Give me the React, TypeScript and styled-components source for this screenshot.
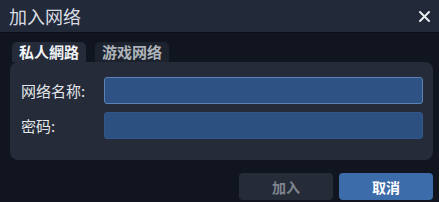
import React, { useState } from 'react';
import styled, { createGlobalStyle } from 'styled-components';

const GlobalStyle = createGlobalStyle`
  html, body {
    margin: 0;
    padding: 0;
    background: #101520;
  }
  * { box-sizing: border-box; }
`;

const Window = styled.div`
  width: 439px;
  height: 202px;
  display: flex;
  flex-direction: column;
  background: #101520;
  font-family: 'Noto Sans CJK SC', 'Noto Sans', sans-serif;
  overflow: hidden;
`;

const TitleBar = styled.div`
  height: 33px;
  flex-shrink: 0;
  display: flex;
  align-items: center;
  justify-content: space-between;
  padding: 0 5px 0 9px;
  background: #222938;
  border-bottom: 1px solid #0b0f18;
`;

const Title = styled.div`
  color: #d9dde3;
  font-size: 18px;
  line-height: 1;
`;

const CloseButton = styled.button`
  width: 20px;
  height: 20px;
  display: flex;
  align-items: center;
  justify-content: center;
  background: none;
  border: none;
  padding: 0;
  cursor: pointer;
`;

const Content = styled.div`
  flex: 1;
  display: flex;
  flex-direction: column;
  padding: 9px 6px 0 10px;
`;

const TabRow = styled.div`
  display: flex;
  gap: 9px;
  padding-left: 2px;
`;

const Tab = styled.button<{ active: boolean }>`
  height: 20px;
  padding: 0 7px;
  border: none;
  border-radius: 5px 5px 0 0;
  background: ${p => (p.active ? '#252b39' : '#1d232e')};
  color: ${p => (p.active ? '#f2f4f7' : '#aeb3ba')};
  font-family: inherit;
  font-size: 15px;
  font-weight: 700;
  line-height: 20px;
  cursor: pointer;
`;

const Panel = styled.div`
  height: 98px;
  display: flex;
  flex-direction: column;
  gap: 8px;
  padding: 15px 10px 0 11px;
  background: #252b39;
  border-radius: 8px;
`;

const Row = styled.div`
  display: flex;
  align-items: center;
`;

const Label = styled.label`
  width: 83px;
  color: #e4e7eb;
  font-size: 15px;
`;

const Input = styled.input<{ focused?: boolean }>`
  flex: 1;
  height: 27px;
  border-radius: 3px;
  border: 1px solid ${p => (p.focused ? '#5b82b6' : '#30568a')};
  background: ${p => (p.focused ? '#2d5283' : '#2c507f')};
  color: #fff;
  font-family: inherit;
  font-size: 13px;
  padding: 0 6px;
  outline: none;
`;

const Footer = styled.div`
  display: flex;
  justify-content: flex-end;
  gap: 6px;
  margin-top: 13px;
`;

const Button = styled.button<{ primary?: boolean }>`
  width: 94px;
  height: 27px;
  border: none;
  border-radius: 4px;
  background: ${p => (p.primary ? '#3c6ca9' : '#252b37')};
  color: ${p => (p.primary ? '#ffffff' : '#7f858e')};
  font-family: inherit;
  font-size: 14px;
  font-weight: 700;
  cursor: pointer;
`;

export default function App() {
  const [tab, setTab] = useState(0);
  const tabs = ['私人網路', '游戏网络'];

  return (
    <Window>
      <GlobalStyle />
      <TitleBar>
        <Title>加入网络</Title>
        <CloseButton>
          <svg width="11" height="11" viewBox="0 0 11 11">
            <path d="M1 1 L10 10 M10 1 L1 10" stroke="#e8ebef" strokeWidth="2" strokeLinecap="round" />
          </svg>
        </CloseButton>
      </TitleBar>
      <Content>
        <TabRow>
          {tabs.map((t, i) => (
            <Tab key={t} active={i === tab} onClick={() => setTab(i)}>
              {t}
            </Tab>
          ))}
        </TabRow>
        <Panel>
          <Row>
            <Label>网络名称:</Label>
            <Input focused />
          </Row>
          <Row>
            <Label>密码:</Label>
            <Input type="password" />
          </Row>
        </Panel>
        <Footer>
          <Button>加入</Button>
          <Button primary>取消</Button>
        </Footer>
      </Content>
    </Window>
  );
}
